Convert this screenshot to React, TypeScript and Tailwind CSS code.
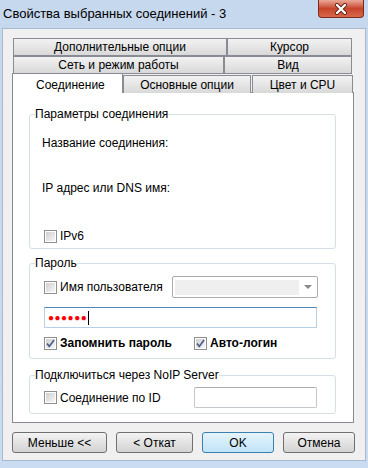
import React from "react";

const font = { fontFamily: '"Liberation Sans", Arial, sans-serif' };

const Check = ({ checked }: { checked?: boolean }) => (
  <span className="relative inline-block w-[13px] h-[13px] shrink-0 border border-[#8e8f8f] bg-white p-px">
    <span className="block w-full h-full bg-linear-to-br from-[#cfcfcf] to-[#f7f7f7]" />
    {checked ? (
      <svg
        viewBox="0 0 13 13"
        className="absolute -left-px -top-px w-[13px] h-[13px]"
      >
        <path
          d="M3 6.5 L5.3 9.4 L10 3"
          fill="none"
          stroke="#4a5d8c"
          strokeWidth="1.7"
        />
      </svg>
    ) : null}
  </span>
);

const Tab = ({ label, className }: any) => (
  <div
    className={`flex items-center justify-center h-[18px] border border-[#898c95] bg-linear-to-b from-[#f2f2f2] to-[#d9d9d9] text-[12px] text-black ${className}`}
  >
    {label}
  </div>
);

const Btn = ({ label, primary, className }: any) => (
  <button
    className={`h-[21px] rounded-[3px] border text-[12px] text-black leading-none ${
      primary
        ? "border-[#3c7fb1] bg-linear-to-b from-[#e5f4fc] to-[#c1e4f8]"
        : "border-[#707070] bg-linear-to-b from-[#f3f3f3] to-[#d3d3d3]"
    } ${className}`}
  >
    {label}
  </button>
);

export default function App() {
  return (
    <div
      className="w-[368px] h-[468px] flex flex-col bg-linear-to-b from-[#c6d8ed] to-[#cadcf1] overflow-hidden"
      style={font}
    >
      {/* title bar */}
      <div className="h-[28px] flex items-start justify-between shrink-0">
        <span className="pl-[3px] pt-[6px] text-[13px] text-black leading-[16px]">
          Свойства выбранных соединений - 3
        </span>
        <div className="mr-[4px] w-[46px] h-[18px] rounded-b-[4px] border border-t-0 border-[#7d2a1c] bg-linear-to-b from-[#e9a899] via-[#c6452b] to-[#d9674a] flex items-center justify-center">
          <svg viewBox="0 0 14 12" className="w-[14px] h-[12px]">
            <path d="M3 2 L11 10 M11 2 L3 10" stroke="#5e1f14" strokeWidth="4" strokeLinecap="round" />
            <path d="M3 2 L11 10 M11 2 L3 10" stroke="#ffffff" strokeWidth="2.4" strokeLinecap="round" />
          </svg>
        </div>
      </div>

      {/* client area */}
      <div className="flex-1 mx-[2px] mb-[7px] border border-[#a9b8ca] bg-[#f0f0f0] pl-[9px] pt-[9px]">
        {/* tabs */}
        <div className="w-[343px]">
          <div className="flex pl-px">
            <Tab label="Дополнительные опции" className="w-[214px]" />
            <Tab label="Курсор" className="w-[125px]" />
          </div>
          <div className="flex pl-px">
            <Tab label="Сеть и режим работы" className="w-[211px]" />
            <Tab label="Вид" className="w-[128px]" />
          </div>
          <div className="flex items-end h-[19px] -mb-px relative z-10">
            <div className="w-[111px] h-[20px] border border-[#898c95] border-b-0 bg-white text-[12px] text-black pl-[23px] pt-[2px]">
              Соединение
            </div>
            <Tab label="Основные опции" className="w-[128px] h-[17px] border-b-0" />
            <Tab label="Цвет и CPU" className="w-[101px] h-[17px] border-b-0 ml-[1px]" />
          </div>

          {/* panel */}
          <div className="w-[342px] h-[331px] border border-[#898c95] bg-white pl-[16px] pr-[17px] pt-[13px] text-[12px] text-black">
            <fieldset className="h-[143px] border border-[#d5dfe5] rounded-[3px] px-0">
              <legend className="ml-[5px] px-0 leading-[16px]">Параметры соединения</legend>
              <div className="mt-[13px] pl-[12px] leading-[16px]">Название соединения:</div>
              <div className="mt-[29px] pl-[12px] leading-[16px]">IP адрес или DNS имя:</div>
              <div className="mt-[32px] pl-[14px] flex items-center gap-[3px] h-[16px]">
                <Check />
                <span>IPv6</span>
              </div>
            </fieldset>

            <fieldset className="mt-[6px] h-[104px] border border-[#d5dfe5] rounded-[3px] px-0">
              <legend className="ml-[5px] px-0 leading-[16px]">Пароль</legend>
              <div className="mt-[5px] pl-[14px] flex items-center h-[22px]">
                <div className="w-[128px] flex items-center gap-[3px]">
                  <Check />
                  <span>Имя пользователя</span>
                </div>
                <div className="w-[146px] h-[22px] border border-[#acacac] rounded-[2px] bg-white flex items-center pl-[2px] pr-[5px]">
                  <div className="w-[124px] h-[15px] bg-[#efefef]" />
                  <svg viewBox="0 0 8 5" className="ml-auto w-[8px] h-[5px]">
                    <path d="M0 0 H8 L4 4 Z" fill="#8a8a8a" />
                  </svg>
                </div>
              </div>
              <div className="mt-[9px] ml-[14px] w-[273px] h-[21px] border border-[#b7d0e6] border-t-[#4f86b6] bg-white flex items-center pl-[3px]">
                <span className="text-[#ff0000] text-[10px] tracking-[0.5px] leading-none">●●●●●●</span>
                <span className="ml-px w-px h-[14px] bg-black" />
              </div>
              <div className="mt-[7px] pl-[14px] flex items-center h-[16px] font-bold">
                <div className="w-[150px] flex items-center gap-[3px]">
                  <Check checked />
                  <span>Запомнить пароль</span>
                </div>
                <div className="w-[84px] flex items-center gap-[3px] whitespace-nowrap">
                  <Check checked />
                  <span>Авто-логин</span>
                </div>
              </div>
            </fieldset>

            <fieldset className="mt-[8px] h-[47px] border border-[#d5dfe5] rounded-[3px] px-0">
              <legend className="ml-[5px] px-0 leading-[16px]">Подключиться через NoIP Server</legend>
              <div className="mt-[4px] pl-[14px] flex items-center h-[21px]">
                <div className="w-[150px] flex items-center gap-[3px]">
                  <Check />
                  <span>Соединение по ID</span>
                </div>
                <div className="w-[123px] h-[21px] border border-[#c4c7cc] border-t-[#abadb3] rounded-[2px] bg-white" />
              </div>
            </fieldset>
          </div>
        </div>

        {/* buttons */}
        <div className="flex mt-[9px]">
          <Btn label="Меньше <<" className="w-[95px]" />
          <Btn label="< Откат" className="w-[77px] ml-[9px]" />
          <Btn label="OK" primary className="w-[72px] ml-[9px]" />
          <Btn label="Отмена" className="w-[72px] ml-[9px]" />
        </div>
      </div>
    </div>
  );
}
